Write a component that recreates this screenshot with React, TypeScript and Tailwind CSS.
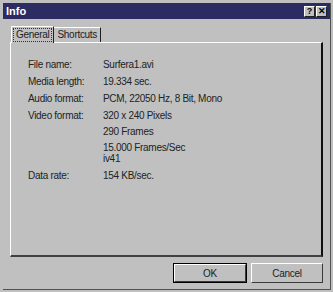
import React from "react"

const rows: { label: string; values: string[] }[] = [
  { label: "File name:", values: ["Surfera1.avi"] },
  { label: "Media length:", values: ["19.334 sec."] },
  { label: "Audio format:", values: ["PCM, 22050 Hz, 8 Bit, Mono"] },
  { label: "Video format:", values: ["320 x 240 Pixels", "290 Frames", "15.000 Frames/Sec", "iv41"] },
  { label: "Data rate:", values: ["154 KB/sec."] },
]

function TitleButton({ children }: { children: React.ReactNode }) {
  return (
    <div className="w-[11px] h-[11px] bg-[#c0c0c0] border-t border-l border-white border-r border-b border-r-[#202020] border-b-[#202020] flex items-center justify-center text-[9px] font-bold leading-none text-black">
      {children}
    </div>
  )
}

function DlgButton({ label, isDefault }: { label: string; isDefault?: boolean }) {
  return (
    <div
      className={
        isDefault
          ? "w-[74px] h-[20px] border border-black flex"
          : "w-[72px] h-[20px] flex"
      }
    >
      <div className="flex-1 bg-[#c0c0c0] border-t border-l border-white border-r border-b border-r-[#3a3a3a] border-b-[#3a3a3a] flex items-center justify-center text-[10px] tracking-[-0.3px] text-[#222]">
        {label}
      </div>
    </div>
  )
}

export default function App() {
  return (
    <div
      className="w-[333px] h-[292px] bg-[#c0c0c0] pt-[3px] pl-[3px] pr-[2px] pb-[2px]"
      style={{ fontFamily: '"Liberation Sans", Arial, sans-serif' }}
    >
      <div className="h-full flex flex-col border-r border-b border-[#505050]">
        {/* title bar */}
        <div className="h-[16px] bg-[#2c2c62] flex items-center justify-between pl-[3px] pr-[3px]">
          <span className="text-white text-[11px] font-bold leading-none">Info</span>
          <div className="flex gap-[1px]">
            <TitleButton>?</TitleButton>
            <TitleButton>✕</TitleButton>
          </div>
        </div>

        {/* tabs */}
        <div className="flex items-end pl-[8px] mt-[6px] h-[17px] text-[10px] tracking-[-0.3px] text-[#222]">
          <div className="h-[17px] bg-[#c0c0c0] border-t border-l border-white border-r border-r-[#202020] px-[1px] pt-[1px] relative z-10 -mb-[1px]">
            <div className="border border-dotted border-[#333] px-[2px] leading-[12px]">General</div>
          </div>
          <div className="h-[15px] border-t border-r border-white border-r-[#202020] pl-[3px] pr-[3px] leading-[13px]">
            Shortcuts
          </div>
        </div>

        {/* panel */}
        <div className="h-[215px] ml-[7px] mr-[7px] border-t border-l border-white border-r-2 border-b-2 border-r-[#101010] border-b-[#404040] pt-[15px] pl-[17px]">
          <div className="flex flex-col gap-[4px] text-[10px] tracking-[-0.3px] text-[#222] leading-[13px]">
            <div className="flex">
              <div className="w-[75px]">{rows[0].label}</div>
              <div>{rows[0].values[0]}</div>
            </div>
            <div className="flex">
              <div className="w-[75px]">{rows[1].label}</div>
              <div>{rows[1].values[0]}</div>
            </div>
            <div className="flex">
              <div className="w-[75px]">{rows[2].label}</div>
              <div>{rows[2].values[0]}</div>
            </div>
            <div className="flex">
              <div className="w-[75px]">{rows[3].label}</div>
              <div className="flex flex-col">
                <div>{rows[3].values[0]}</div>
                <div className="mt-[3px]">{rows[3].values[1]}</div>
                <div className="mt-[3px]">{rows[3].values[2]}</div>
                <div className="-mt-[2px]">{rows[3].values[3]}</div>
              </div>
            </div>
            <div className="flex">
              <div className="w-[75px]">{rows[4].label}</div>
              <div>{rows[4].values[0]}</div>
            </div>
          </div>
        </div>

        {/* buttons */}
        <div className="flex justify-end gap-[4px] mr-[7px] mt-[6px]">
          <DlgButton label="OK" isDefault />
          <DlgButton label="Cancel" />
        </div>
      </div>
    </div>
  )
}
